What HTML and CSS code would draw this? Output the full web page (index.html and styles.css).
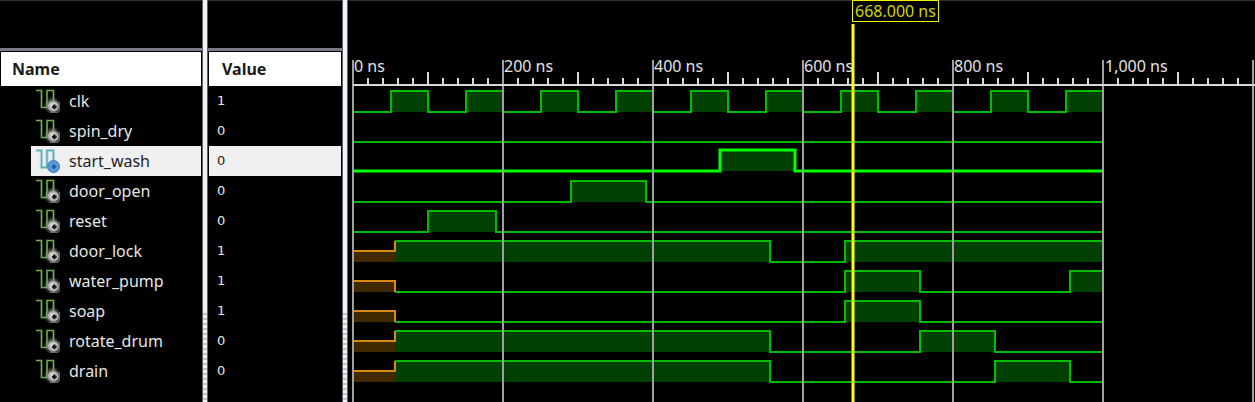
FILE: index.html
```html
<!DOCTYPE html>
<html lang="en">
<head>
<meta charset="utf-8">
<title>Waveform viewer</title>
<link rel="stylesheet" href="styles.css">
</head>
<body>
<svg class="defs" aria-hidden="true">
  <defs>
    <radialGradient id="ball-grey" cx="40%" cy="40%" r="65%">
      <stop offset="0" stop-color="#e4e4e4"/><stop offset="0.5" stop-color="#a8a8a8"/><stop offset="1" stop-color="#6a6a6a"/>
    </radialGradient>
    <radialGradient id="halo-grey">
      <stop offset="0.5" stop-color="#909090" stop-opacity="0.7"/><stop offset="1" stop-color="#909090" stop-opacity="0"/>
    </radialGradient>
    <symbol id="signal" viewBox="0 0 24 24">
      <path d="M0 1.5H5.5V18.5H11V1.5H17.5V13" fill="none" stroke="#3c6b2b" stroke-width="2.2"/>
      <path d="M0 1.5H5.5V18.5H11V1.5H17.5V13" fill="none" stroke="#76ac59" stroke-width="1"/>
      <circle cx="16.5" cy="16.5" r="9" fill="url(#halo-grey)"/>
      <path d="M23.3 13V21.5L21.5 23.3H14" fill="none" stroke="#6a6a6a" stroke-width="1.2"/>
      <circle cx="17.5" cy="17.5" r="5.8" fill="url(#ball-grey)"/>
      <circle cx="18" cy="17.7" r="3.6" fill="none" stroke="#d8d8d8" stroke-width="0.8"/>
      <path d="M18.3 15.4v4.6M16 17.7h4.6" stroke="#111111" stroke-width="2"/>
    </symbol>
    <symbol id="signal-selected" viewBox="0 0 24 24">
      <path d="M0 1.5H5.5V18.5H11V1.5H17.5V13" fill="none" stroke="#c4dfe8" stroke-width="3.6"/>
      <path d="M0 1.5H5.5V18.5H11V1.5H17.5V13" fill="none" stroke="#58a9b2" stroke-width="1.4"/>
      <circle cx="17.5" cy="17.5" r="6.5" fill="#5b9bdb"/>
      <circle cx="17.5" cy="17.5" r="5.8" fill="none" stroke="#4580bf"/>
      <path d="M18 15.4v4.6M15.7 17.7h4.6" stroke="#1d508c" stroke-width="1.8"/>
    </symbol>
  </defs>
</svg>
<main class="viewer">
  <section class="pane pane-names">
    <table class="signals">
      <thead><tr><th scope="col">Name</th></tr></thead>
      <tbody>
        <tr><td><span class="cell"><svg class="icon"><use href="#signal"/></svg>clk</span></td></tr>
        <tr><td><span class="cell"><svg class="icon"><use href="#signal"/></svg>spin_dry</span></td></tr>
        <tr class="selected"><td><span class="cell"><svg class="icon"><use href="#signal-selected"/></svg>start_wash</span></td></tr>
        <tr><td><span class="cell"><svg class="icon"><use href="#signal"/></svg>door_open</span></td></tr>
        <tr><td><span class="cell"><svg class="icon"><use href="#signal"/></svg>reset</span></td></tr>
        <tr><td><span class="cell"><svg class="icon"><use href="#signal"/></svg>door_lock</span></td></tr>
        <tr><td><span class="cell"><svg class="icon"><use href="#signal"/></svg>water_pump</span></td></tr>
        <tr><td><span class="cell"><svg class="icon"><use href="#signal"/></svg>soap</span></td></tr>
        <tr><td><span class="cell"><svg class="icon"><use href="#signal"/></svg>rotate_drum</span></td></tr>
        <tr><td><span class="cell"><svg class="icon"><use href="#signal"/></svg>drain</span></td></tr>
      </tbody>
    </table>
  </section>
  <div class="splitter"></div>
  <section class="pane pane-values">
    <table class="signals">
      <thead><tr><th scope="col">Value</th></tr></thead>
      <tbody>
        <tr><td><span class="cell">1</span></td></tr>
        <tr><td><span class="cell">0</span></td></tr>
        <tr class="selected"><td><span class="cell">0</span></td></tr>
        <tr><td><span class="cell">0</span></td></tr>
        <tr><td><span class="cell">0</span></td></tr>
        <tr><td><span class="cell">1</span></td></tr>
        <tr><td><span class="cell">1</span></td></tr>
        <tr><td><span class="cell">1</span></td></tr>
        <tr><td><span class="cell">0</span></td></tr>
        <tr><td><span class="cell">0</span></td></tr>
      </tbody>
    </table>
  </section>
  <div class="splitter"></div>
  <section class="waves">
    <svg class="plot" role="img" aria-label="Signal waveforms">
      <defs>
        <pattern id="ticks" x="0" y="0" width="75" height="86" patternUnits="userSpaceOnUse">
          <path class="tick" d="M15 78V85M30 78V85M45 78V85M60 78V85"/>
        </pattern>
      </defs>
      <svg x="5" class="timeline">
        <!-- Each group is one 30px row; y 0 is the row's middle. -->
        <g transform="translate(0 101)">
          <path class="fill" d="M38 -10H75V11H38ZM113 -10H150V11H113ZM188 -10H225V11H188ZM263 -10H300V11H263ZM338 -10H375V11H338ZM413 -10H450V11H413ZM488 -10H525V11H488ZM563 -10H600V11H563ZM638 -10H675V11H638ZM713 -10H750V11H713Z"/>
          <path class="wave" d="M0 11H38V-10H75V11H113V-10H150V11H188V-10H225V11H263V-10H300V11H338V-10H375V11H413V-10H450V11H488V-10H525V11H563V-10H600V11H638V-10H675V11H713V-10H750"/>
        </g>
        <g transform="translate(0 131)"><path class="wave" d="M0 11H750"/></g>
        <g transform="translate(0 161)">
          <path class="fill" d="M367 -11H442V10H367Z"/>
          <path class="wave wave-selected" d="M0 10H367V-11H442V10H750"/>
        </g>
        <g transform="translate(0 191)">
          <path class="fill" d="M218 -10H293V11H218Z"/>
          <path class="wave" d="M0 11H218V-10H293V11H750"/>
        </g>
        <g transform="translate(0 221)">
          <path class="fill" d="M75 -10H143V11H75Z"/>
          <path class="wave" d="M0 11H75V-10H143V11H750"/>
        </g>
        <g transform="translate(0 251)">
          <path class="fill-unknown" d="M0 0H42V11H0Z"/>
          <path class="fill" d="M42 -10H417V11H42ZM492 -10H750V11H492Z"/>
          <path class="wave" d="M42 -10H417V11H492V-10H750"/>
          <path class="wave wave-unknown" d="M0 0H42V-10"/>
        </g>
        <g transform="translate(0 281)">
          <path class="fill-unknown" d="M0 0H42V11H0Z"/>
          <path class="fill" d="M492 -10H567V11H492ZM717 -10H750V11H717Z"/>
          <path class="wave" d="M42 11H492V-10H567V11H717V-10H750"/>
          <path class="wave wave-unknown" d="M0 0H42V11"/>
        </g>
        <g transform="translate(0 311)">
          <path class="fill-unknown" d="M0 0H42V11H0Z"/>
          <path class="fill" d="M492 -10H567V11H492Z"/>
          <path class="wave" d="M42 11H492V-10H567V11H750"/>
          <path class="wave wave-unknown" d="M0 0H42V11"/>
        </g>
        <g transform="translate(0 341)">
          <path class="fill-unknown" d="M0 0H42V11H0Z"/>
          <path class="fill" d="M42 -10H417V11H42ZM567 -10H642V11H567Z"/>
          <path class="wave" d="M42 -10H417V11H567V-10H642V11H750"/>
          <path class="wave wave-unknown" d="M0 0H42V-10"/>
        </g>
        <g transform="translate(0 371)">
          <path class="fill-unknown" d="M0 0H42V11H0Z"/>
          <path class="fill" d="M42 -10H417V11H42ZM642 -10H717V11H642Z"/>
          <path class="wave" d="M42 -10H417V11H642V-10H717V11H750"/>
          <path class="wave wave-unknown" d="M0 0H42V-10"/>
        </g>
        <!-- Ruler -->
        <rect width="100%" height="86" fill="url(#ticks)"/>
        <path class="tick" d="M75 72V85M225 72V85M375 72V85M525 72V85M675 72V85M825 72V85"/>
        <g class="grid">
          <line x1="0" y1="60" x2="0" y2="100%"/>
          <line x1="150" y1="60" x2="150" y2="100%"/>
          <line x1="300" y1="60" x2="300" y2="100%"/>
          <line x1="450" y1="60" x2="450" y2="100%"/>
          <line x1="600" y1="60" x2="600" y2="100%"/>
          <line x1="750" y1="60" x2="750" y2="100%"/>
          <line x1="900" y1="60" x2="900" y2="100%"/>
        </g>
        <line class="axis" x1="0" y1="85" x2="100%" y2="85"/>
        <g class="labels">
          <text x="1" y="72">0 ns</text>
          <text x="151" y="72">200 ns</text>
          <text x="301" y="72">400 ns</text>
          <text x="451" y="72">600 ns</text>
          <text x="601" y="72">800 ns</text>
          <text x="752" y="72">1,000 ns</text>
        </g>
        <line class="cursor" x1="500" y1="24" x2="500" y2="100%"/>
      </svg>
    </svg>
    <output class="cursor-time">668.000 ns</output>
  </section>
</main>
</body>
</html>
```
FILE: styles.css
```css
* { box-sizing: border-box; }

body {
  margin: 0;
  background: #000;
  color: #e6e6e6;
  font-family: "Noto Sans", sans-serif;
}

.defs { position: absolute; width: 0; height: 0; }

.viewer {
  display: flex;
  min-height: 100vh;
  background: linear-gradient(#303030 1px, #000 1px);
}

.pane {
  flex: none;
  padding: 48px 1px 0;
}

.pane-names { width: 202px; }
.pane-values { width: 134px; }

.splitter {
  flex: none;
  width: 6px;
  border: solid #5c606b;
  border-width: 0 1px;
  background:
    linear-gradient(#f2f2f4, #f2f2f4) 0 0 / 100% 310px no-repeat,
    repeating-linear-gradient(#f0f0f0 0 3px, #c4c4c8 3px 5px);
}

.pane::before {
  content: "";
  display: block;
  height: 3px;
  margin: 0 -1px 1px;
  background: #777b86;
}

.signals {
  width: 100%;
  border-collapse: collapse;
}

.signals th {
  height: 34px;
  padding: 0 11px 1px;
  background: #fff;
  color: #1b1b1b;
  font-size: 16px;
  line-height: 24px;
  font-weight: 700;
  text-align: left;
}

.pane-values th { padding-left: 13px; }

.signals td { height: 30px; padding: 0; }

.cell {
  display: flex;
  align-items: center;
  gap: 9px;
  height: 30px;
  padding-bottom: 1px;
  font-size: 16px;
}

.pane-names .cell {
  margin-left: 30px;
  padding-left: 5px;
}

.pane-values .cell {
  padding-left: 8px;
  font-family: "DejaVu Sans", sans-serif;
  font-size: 13px;
}

.selected .cell {
  background: #f0f0f0;
  color: #1f1f28;
}

.icon { width: 24px; height: 24px; }

.waves {
  position: relative;
  flex: 1;
  min-width: 0;
  overflow: hidden;
}

.plot {
  display: block;
  position: absolute;
  inset: 0;
  width: 100%;
  height: 100%;
}

.timeline { overflow: visible; }

.wave { fill: none; stroke: #00bc00; stroke-width: 2; }
.wave-selected { stroke: #00ff00; stroke-width: 3; }
.wave-unknown { stroke: #d98a14; }
.fill { fill: #004000; }
.fill-unknown { fill: #402800; }
.axis, .tick { stroke: #d8d8d8; stroke-width: 2; }
.grid { stroke: #a0a0a0; stroke-width: 2; }

.labels {
  fill: #e4e4e4;
  font-size: 16px;
}

.cursor { stroke: #ffff00; stroke-width: 3; }

.cursor-time {
  position: absolute;
  top: 0;
  left: 504px;
  padding: 0 2px;
  border: 1px solid #f0f000;
  background: #000;
  color: #d4d400;
  font-size: 16px;
  line-height: 20px;
}
```
